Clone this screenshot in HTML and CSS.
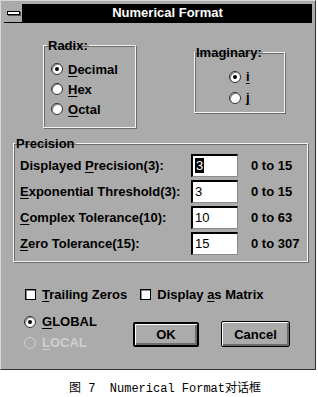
FILE: index.html
```
<!DOCTYPE html>
<html lang="en">
<head>
    <meta charset="UTF-8">
    <title>Numerical Format</title>
    <link rel="stylesheet" href="styles.css">
</head>
<body>
    <div class="window">
        <div class="titlebar">
            <div class="sysmenu"><span class="sysbar"></span></div>
            <div class="title">Numerical Format</div>
        </div>
        <div class="client">
            <div class="top-row">
                <fieldset class="group radix">
                    <legend>Radix:</legend>
                    <div class="opts">
                        <div class="opt"><span class="radio on"></span><span><u>D</u>ecimal</span></div>
                        <div class="opt"><span class="radio"></span><span><u>H</u>ex</span></div>
                        <div class="opt"><span class="radio"></span><span><u>O</u>ctal</span></div>
                    </div>
                </fieldset>
                <fieldset class="group imag">
                    <legend>Imaginary:</legend>
                    <div class="opts">
                        <div class="opt"><span class="radio on"></span><span><u>i</u></span></div>
                        <div class="opt"><span class="radio"></span><span><u>j</u></span></div>
                    </div>
                </fieldset>
            </div>

            <fieldset class="group precision">
                <legend>Precision</legend>
                <div class="rows">
                    <div class="prow">
                        <span class="plabel">Displayed <u>P</u>recision(3):</span>
                        <span class="field"><span class="sel">3</span></span>
                        <span class="range">0 to 15</span>
                    </div>
                    <div class="prow">
                        <span class="plabel"><u>E</u>xponential Threshold(3):</span>
                        <span class="field">3</span>
                        <span class="range">0 to 15</span>
                    </div>
                    <div class="prow">
                        <span class="plabel"><u>C</u>omplex Tolerance(10):</span>
                        <span class="field">10</span>
                        <span class="range">0 to 63</span>
                    </div>
                    <div class="prow">
                        <span class="plabel"><u>Z</u>ero Tolerance(15):</span>
                        <span class="field">15</span>
                        <span class="range">0 to 307</span>
                    </div>
                </div>
            </fieldset>

            <div class="checks">
                <div class="opt"><span class="check"></span><span><u>T</u>railing Zeros</span></div>
                <div class="opt"><span class="check"></span><span>Display <u>a</u>s Matrix</span></div>
            </div>

            <div class="bottom">
                <div class="scope">
                    <div class="opt"><span class="radio on"></span><span><u>G</u>LOBAL</span></div>
                    <div class="opt disabled"><span class="radio off"></span><span><u>L</u>OCAL</span></div>
                </div>
                <div class="buttons">
                    <div class="btn default">OK</div>
                    <div class="btn">Cancel</div>
                </div>
            </div>
        </div>
    </div>
    <p class="caption">图 7  Numerical Format对话框</p>
</body>
</html>
```

FILE: styles.css
```
:root {
    --face: #ababab;
    --shadow: #6c6c6c;
    --light: #f4f4f4;
    --text: #000000;
}

body {
    margin: 0;
    background: #ffffff;
    font-family: "Liberation Sans", Arial, sans-serif;
    font-size: 13px;
    font-weight: bold;
    color: var(--text);
}

u {
    text-decoration-thickness: 1px;
    text-underline-offset: 2px;
}

.window {
    box-sizing: border-box;
    width: 316px;
    height: 370px;
    padding: 3px;
    background: var(--face);
    border-top: 1px solid #d6d6d6;
    border-left: 1px solid #d6d6d6;
    border-right: 1px solid #303030;
    border-bottom: 1px solid #303030;
    display: flex;
    flex-direction: column;
}

.titlebar {
    display: flex;
    height: 18px;
    border-bottom: 1px solid #000;
}

.sysmenu {
    width: 18px;
    border-right: 1px solid #000;
    display: flex;
    align-items: center;
    justify-content: center;
}

.sysbar {
    width: 11px;
    height: 2px;
    background: #fff;
    border: 1px solid #000;
    box-shadow: 1px 1px 0 #555;
}

.title {
    flex: 1;
    background: #000;
    color: #fff;
    text-align: center;
    line-height: 18px;
}

.client {
    flex: 1;
    display: flex;
    flex-direction: column;
}

/* group boxes */
.group {
    box-sizing: border-box;
    margin: 0;
    padding: 0;
    min-inline-size: 0;
    border: 1px solid var(--light);
    box-shadow: inset 1px 1px 0 var(--shadow), 1px 1px 0 var(--shadow);
}

.group legend {
    padding: 0 1px;
    line-height: 15px;
}

.top-row {
    display: flex;
    align-items: flex-start;
    padding-top: 15px;
}

.radix {
    width: 93px;
    margin-left: 39px;
}

.radix legend {
    margin-left: 3px;
}

.radix .opts {
    padding: 6px 0 8px 7px;
}

.imag {
    width: 91px;
    margin-left: 58px;
    margin-top: 7px;
}

.imag legend {
    margin-left: 0;
}

.imag .opts {
    padding: 6px 0 4px 34px;
}

.opt {
    display: flex;
    align-items: center;
    gap: 5px;
    height: 20px;
}

.imag .opt {
    height: 21px;
}

.radio {
    box-sizing: border-box;
    width: 12px;
    height: 12px;
    border-radius: 50%;
    background: #fff;
    border: 1px solid #303030;
    box-shadow: inset 1px 1px 0 #8a8a8a;
    display: flex;
    align-items: center;
    justify-content: center;
}

.radio.on::after {
    content: "";
    width: 4px;
    height: 4px;
    border-radius: 50%;
    background: #000;
}

.radio.off {
    background: var(--face);
    border-color: #d0d0d0;
    box-shadow: none;
}

.check {
    box-sizing: border-box;
    width: 11px;
    height: 11px;
    background: #fff;
    border: 1px solid #000;
    box-shadow: inset 1px 1px 0 #8a8a8a;
}

.precision {
    width: 295px;
    margin: 8px 0 0 9px;
}

.precision legend {
    margin-left: 1px;
}

.rows {
    padding: 3px 0 6px 6px;
    display: flex;
    flex-direction: column;
    gap: 3px;
}

.prow {
    display: grid;
    grid-template-columns: 158px 47px auto;
    column-gap: 13px;
    align-items: center;
    height: 23px;
}

.plabel {
    white-space: nowrap;
}

.field {
    box-sizing: border-box;
    height: 23px;
    background: #fff;
    border-top: 2px solid #000;
    border-left: 2px solid #000;
    border-right: 1px solid #8a8a8a;
    border-bottom: 1px solid #8a8a8a;
    font-weight: normal;
    padding-left: 2px;
    line-height: 19px;
}

.sel {
    background: #000;
    color: #fff;
    padding: 0 1px;
}

.checks {
    display: flex;
    gap: 13px;
    margin-top: 25px;
    padding-left: 21px;
}

.checks .opt {
    gap: 6px;
    height: 15px;
}

.bottom {
    display: flex;
    margin-top: 9px;
}

.scope {
    width: 109px;
    padding-left: 20px;
}

.scope .opt {
    height: 21px;
    gap: 6px;
}

.disabled {
    color: #cfcfcf;
}

.buttons {
    display: flex;
    gap: 22px;
    margin-top: 10px;
    align-items: flex-start;
}

.btn {
    box-sizing: border-box;
    width: 69px;
    height: 26px;
    border: 1px solid #000;
    border-radius: 2px;
    box-shadow: inset 1px 1px 0 #fff, inset -2px -2px 0 var(--shadow);
    display: flex;
    align-items: center;
    justify-content: center;
}

.btn.default {
    width: 66px;
    margin-top: 1px;
    height: 25px;
    border-width: 2px;
}

.caption {
    margin: 8px 0 0;
    padding-left: 12px;
    text-align: center;
    white-space: pre;
    font-family: "Liberation Mono", "Noto Sans CJK SC", monospace;
    font-weight: normal;
    font-size: 12px;
}
```
